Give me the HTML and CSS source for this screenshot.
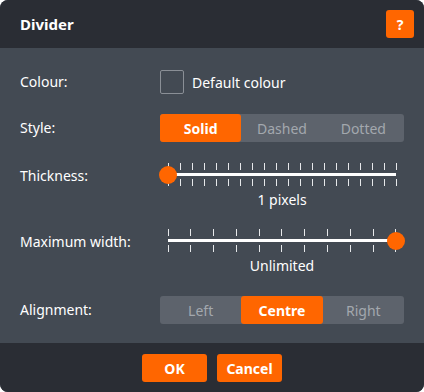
FILE: index.html
```html
<!DOCTYPE html>
<html lang="en">
<head>
    <meta charset="UTF-8">
    <meta name="viewport" content="width=device-width, initial-scale=1.0">
    <title>Divider</title>
    <link rel="stylesheet" href="styles.css">
</head>
<body>
    <div class="dialog">
        <div class="dialog-header">
            <h2>Divider</h2>
            <button class="help-btn">?</button>
        </div>

        <div class="dialog-body">
            <div class="row">
                <label>Colour:</label>
                <div class="check">
                    <span class="check-box"></span>
                    <span>Default colour</span>
                </div>
            </div>

            <div class="row">
                <label>Style:</label>
                <div class="segmented">
                    <span class="seg active">Solid</span>
                    <span class="seg">Dashed</span>
                    <span class="seg">Dotted</span>
                </div>
            </div>

            <div class="row slider-row">
                <label>Thickness:</label>
                <div class="slider-wrap">
                    <div class="slider">
                        <div class="ticks">
                            <i></i><i></i><i></i><i></i><i></i><i></i><i></i><i></i><i></i><i></i>
                            <i></i><i></i><i></i><i></i><i></i><i></i><i></i><i></i><i></i><i></i>
                        </div>
                        <div class="track"></div>
                        <div class="ticks">
                            <i></i><i></i><i></i><i></i><i></i><i></i><i></i><i></i><i></i><i></i>
                            <i></i><i></i><i></i><i></i><i></i><i></i><i></i><i></i><i></i><i></i>
                        </div>
                        <span class="thumb" style="left: 0%"></span>
                    </div>
                    <div class="slider-value">1 pixels</div>
                </div>
            </div>

            <div class="row slider-row">
                <label>Maximum width:</label>
                <div class="slider-wrap">
                    <div class="slider">
                        <div class="ticks">
                            <i></i><i></i><i></i><i></i><i></i><i></i><i></i><i></i><i></i><i></i><i></i>
                        </div>
                        <div class="track"></div>
                        <div class="ticks">
                            <i></i><i></i><i></i><i></i><i></i><i></i><i></i><i></i><i></i><i></i><i></i>
                        </div>
                        <span class="thumb" style="left: 100%"></span>
                    </div>
                    <div class="slider-value">Unlimited</div>
                </div>
            </div>

            <div class="row align-row">
                <label>Alignment:</label>
                <div class="segmented">
                    <span class="seg">Left</span>
                    <span class="seg active">Centre</span>
                    <span class="seg">Right</span>
                </div>
            </div>
        </div>

        <div class="dialog-footer">
            <button class="btn">OK</button>
            <button class="btn">Cancel</button>
        </div>
    </div>
</body>
</html>
```

FILE: styles.css
```css
:root {
    --orange: #ff6600;
    --dark: #2a2d34;
    --panel: #434a53;
    --seg-bg: #5d636c;
    --seg-text: #a3a8ae;
    --text: #ffffff;
}

* {
    box-sizing: border-box;
    margin: 0;
    padding: 0;
    font-family: 'Noto Sans', 'Open Sans', sans-serif;
}

body {
    background: #ffffff;
    width: 424px;
    height: 392px;
}

.dialog {
    width: 424px;
    height: 392px;
    border-radius: 8px;
    overflow: hidden;
    background: var(--panel);
    color: var(--text);
    font-size: 14px;
    display: flex;
    flex-direction: column;
}

.dialog-header {
    background: var(--dark);
    height: 48px;
    padding: 0 10px 0 20px;
    display: flex;
    align-items: center;
    justify-content: space-between;
}

.dialog-header h2 {
    font-size: 15px;
    font-weight: 700;
}

.help-btn {
    width: 28px;
    height: 28px;
    border: none;
    border-radius: 3px;
    background: var(--orange);
    color: #fff;
    font-weight: 700;
    font-size: 14px;
}

.dialog-body {
    flex: 1;
    padding: 22px 20px 0 20px;
    display: flex;
    flex-direction: column;
    gap: 20px;
}

.row {
    display: grid;
    grid-template-columns: 140px 1fr;
    align-items: center;
}

.row label {
    line-height: 24px;
}

.slider-row {
    align-items: start;
}

.slider-row label {
    padding-top: 2px;
}

.align-row {
    margin-top: 2px;
}

.check {
    display: flex;
    align-items: center;
    gap: 8px;
    height: 24px;
}

.check-box {
    width: 24px;
    height: 24px;
    border: 1px solid #8a8f96;
    border-radius: 2px;
}

.segmented {
    display: flex;
    height: 28px;
    background: var(--seg-bg);
    border-radius: 3px;
}

.seg {
    flex: 1;
    display: flex;
    align-items: center;
    justify-content: center;
    color: var(--seg-text);
    border-radius: 3px;
}

.seg.active {
    background: var(--orange);
    color: #fff;
    font-weight: 700;
}

.slider-wrap {
    display: flex;
    flex-direction: column;
    align-items: center;
}

.slider {
    position: relative;
    width: 228px;
    display: flex;
    flex-direction: column;
    gap: 3px;
    padding-top: 1px;
}

.ticks {
    display: flex;
    justify-content: space-between;
    height: 7px;
    margin: 0 -0.5px;
}

.ticks i {
    width: 1px;
    height: 7px;
    background: #e6e8ea;
}

.track {
    height: 3px;
    background: #ffffff;
}

.thumb {
    position: absolute;
    top: 12.5px;
    width: 18px;
    height: 18px;
    margin: -9px 0 0 -9px;
    border-radius: 50%;
    background: var(--orange);
}

.slider-value {
    margin-top: 6px;
    line-height: 16px;
}

.dialog-footer {
    background: var(--dark);
    height: 49px;
    display: flex;
    justify-content: center;
    gap: 10px;
    padding-top: 11px;
}

.btn {
    width: 65px;
    height: 28px;
    border: none;
    border-radius: 3px;
    background: var(--orange);
    color: #fff;
    font-size: 14px;
    font-weight: 700;
}
```
